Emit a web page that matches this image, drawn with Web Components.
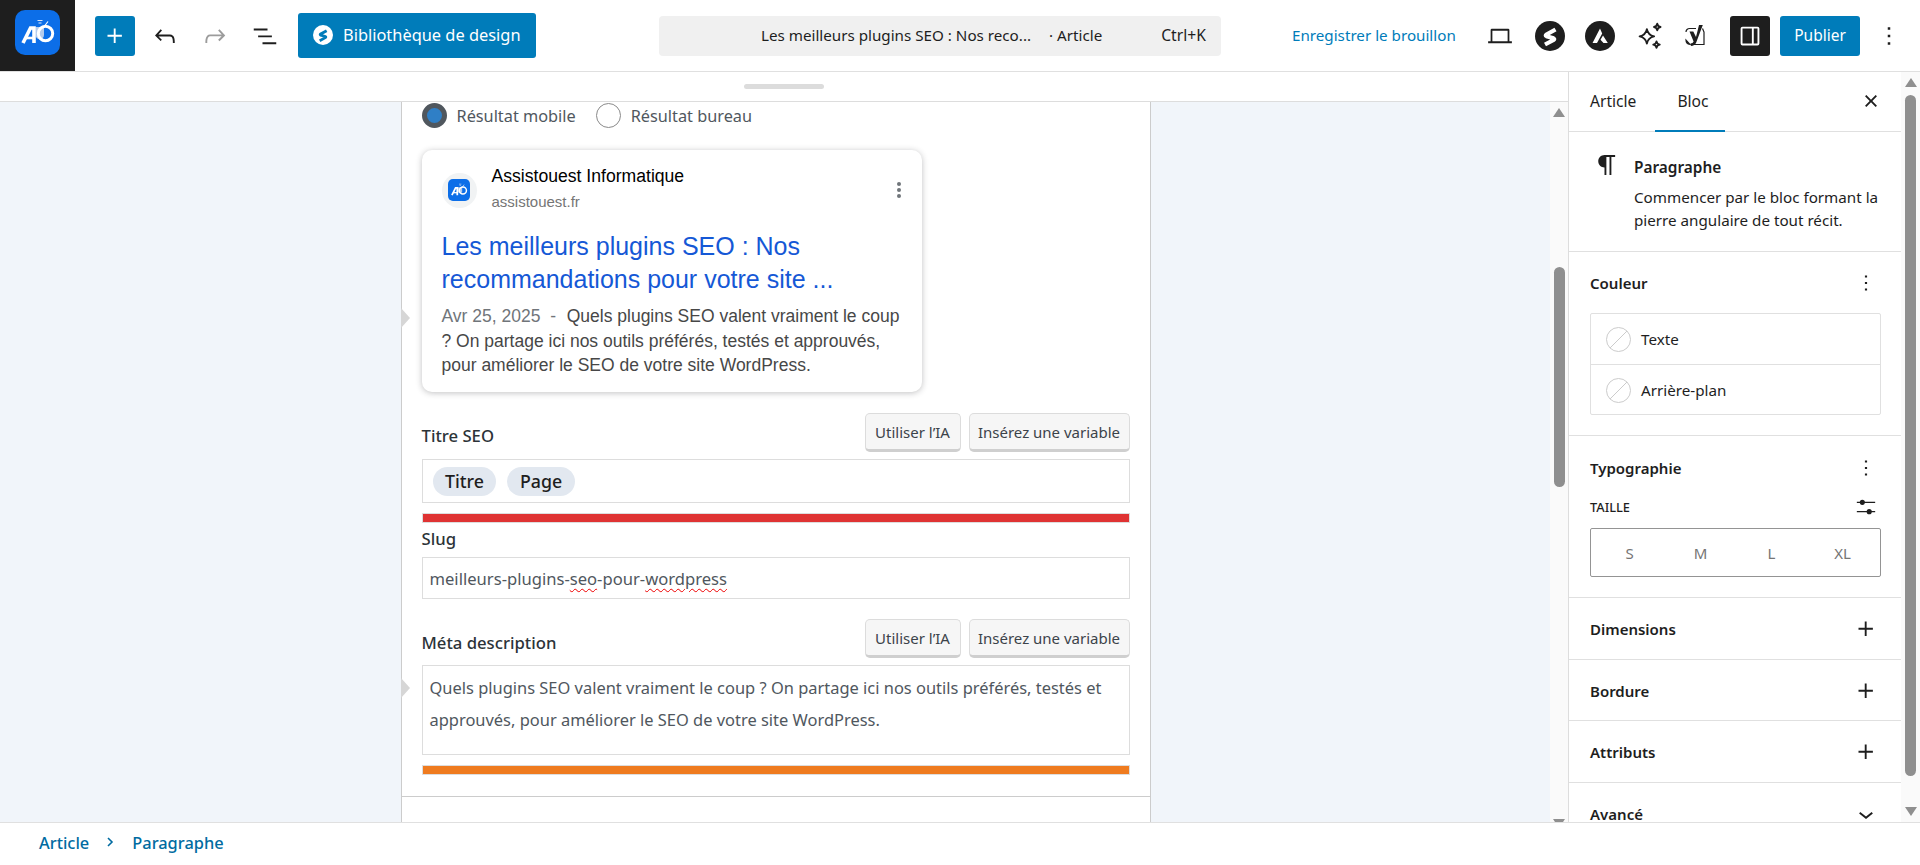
<!DOCTYPE html>
<html lang="fr">
<head>
<meta charset="utf-8">
<title>Éditeur</title>
<style>
  html, body { margin: 0; height: 865px; overflow: hidden; background: #fff; }
  body { font-family: "Noto Sans", "Open Sans", sans-serif; color: #1e1e1e; }
  wp-app { height: 865px; }
</style>
</head>
<body>
<wp-app></wp-app>
<script>
const ICONS = {
    plus: '<path d="M11 12.5V17.5H12.5V12.5H17.5V11H12.5V6H11V11H6V12.5H11Z"/>',
    undo: '<path d="M18.3 11.7c-.6-.6-1.4-.9-2.3-.9H6.7l2.9-3.3-1.1-1-4.5 5L8.5 16l1-1-2.7-2.7H16c.5 0 .9.2 1.3.5 1 1 1 3.4 1 4.5v.3h1.5v-.2c0-1.5 0-4.3-1.5-5.7z"/>',
    redo: '<path d="M15.6 6.5l-1.1 1 2.9 3.3H8c-.9 0-1.7.3-2.3.9-1.4 1.5-1.4 4.2-1.4 5.6v.2h1.5v-.3c0-1.1 0-3.5 1-4.5.3-.3.7-.5 1.3-.5h9.2L14.5 15l1.1 1.1 4.6-4.6-4.6-5z"/>',
    list: '<path d="M3 6h11v1.5H3V6Zm3.5 5.5h11V13h-11v-1.5ZM21 17H10v1.5h11V17Z"/>',
    more: '<path d="M13 19h-2v-2h2v2zm0-6h-2v-2h2v2zm0-6h-2V5h2v2z"/>',
    close: '<path d="M12 13.06l3.712 3.713 1.061-1.06L13.061 12l3.712-3.712-1.06-1.06L12 10.938 8.288 7.227l-1.061 1.06L10.939 12l-3.712 3.712 1.06 1.061L12 13.061z"/>',
    chevron: '<path d="M17.5 11.6L12 16l-5.5-4.4.9-1.2L12 14l4.5-3.6 1 1.2z"/>',
    paragraph: '<path d="m9.99609 14v-.2251l.00391.0001v6.225h1.5v-14.5h2.5v14.5h1.5v-14.5h3v-1.5h-8.50391c-2.76142 0-5 2.23858-5 5 0 2.7614 2.23858 5 5 5z"/>',
    laptop: '<path d="M5.5 6.2h13a1 1 0 0 1 1 1v9.3h-1.4V7.7H5.9v8.8H4.5V7.2a1 1 0 0 1 1-1zM2.5 16.2h19v1.6h-19z"/>',
    sidebar: '<path fill-rule="evenodd" d="M6 4.5h12A1.5 1.5 0 0 1 19.5 6v12a1.5 1.5 0 0 1-1.5 1.5H6A1.5 1.5 0 0 1 4.5 18V6A1.5 1.5 0 0 1 6 4.5zM6 6v12h7.5V6H6zm9 0v12h3V6h-3z"/>',
    sliders: '<path d="M2 6.2h20v1.4H2zM2 16.4h20v1.4H2z"/><circle cx="8" cy="6.9" r="2.8"/><circle cx="15.5" cy="17.1" r="2.8"/>',
    stars: '<g fill="none" stroke="currentColor" stroke-width="1.5" stroke-linejoin="round"><path d="M9.5 6.5c.7 3.6 2.2 5.1 5.8 5.8-3.6.7-5.1 2.2-5.8 5.8-.7-3.6-2.2-5.1-5.8-5.8 3.6-.7 5.1-2.2 5.8-5.8z"/><path d="M17.8 2.2c.3 1.6 1 2.3 2.6 2.6-1.6.3-2.3 1-2.6 2.6-.3-1.6-1-2.3-2.6-2.6 1.6-.3 2.3-1 2.6-2.6z"/><path d="M17.2 16.3c.3 1.6 1 2.3 2.6 2.6-1.6.3-2.3 1-2.6 2.6-.3-1.6-1-2.3-2.6-2.6 1.6-.3 2.3-1 2.6-2.6z"/></g>'
};
const svgIcon = (name, size) => `<svg width="${size}" height="${size}" viewBox="0 0 24 24" fill="currentColor" aria-hidden="true">${ICONS[name]}</svg>`;
const LOGO = `<rect width="45" height="45" rx="10" fill="#0c6ee8"/>
    <path d="M20.5 17h8.500v8a4.200 4.200 0 0 1-8.500 0z" fill="#b4cbec"/>
    <circle cx="30.500" cy="23.500" r="7.200" fill="none" stroke="#fff" stroke-width="3"/>
    <path d="M8 33 15.500 18h3.500v15" fill="none" stroke="#fff" stroke-width="3.600"/>
    <path d="M11 28h8" stroke="#fff" stroke-width="2.600"/>
    <path d="M22.500 10.500h5M23.500 13h3" stroke="#dbe7f8" stroke-width="1.200"/>
    <path d="M28 18 33 11.500" stroke="#fff" stroke-width="1.200"/>`;
const BOLT = 'M20.500 8.500 11.500 13.500Q10 14.500 11.500 15.200L18.500 17.300Q20 18 18.500 19L10 23.500';

// Small square toolbar button, icon goes in the slot
class ToolButton extends HTMLElement {
    constructor() {
        super();
        this.attachShadow({ mode: 'open' }).innerHTML = `
            <style>
                :host { display: flex; align-items: center; justify-content: center; width: 40px; height: 40px; border-radius: 3px; flex: none; color: #1e1e1e; }
                :host([variant="primary"]) { background: #007cba; color: #fff; }
                :host([variant="dark"]) { background: #1e1e1e; color: #fff; }
                :host([muted]) { color: #9c9c9c; }
            </style>
            <slot></slot>`;
    }
}
customElements.define('tool-button', ToolButton);

class EditorHeader extends HTMLElement {
    constructor() {
        super();
        this.attachShadow({ mode: 'open' }).innerHTML = `
            <style>
                :host { display: flex; align-items: center; height: 72px; box-sizing: border-box; border-bottom: 1px solid #e0e0e0; background: #fff; flex: none; font-size: 14px; }
                .brand { width: 75px; height: 71px; background: #1e1e1e; display: flex; align-items: flex-start; box-sizing: border-box; padding: 10px 0 0 15px; flex: none; align-self: flex-start; }
                .tools { display: flex; gap: 10px; margin-left: 20px; }
                .library { display: flex; align-items: center; gap: 10px; margin-left: 13px; width: 238px; height: 45px; box-sizing: border-box; padding: 0 0 2px 15px; background: #007cba; color: #fff; border-radius: 3px; font-size: 16.400px; white-space: nowrap; }
                .command { display: flex; align-items: center; width: 562px; height: 40px; margin-left: 123px; background: #f0f0f0; border-radius: 4px; box-sizing: border-box; padding: 0 15px 2px 102px; font-size: 15.200px; white-space: nowrap; }
                .command .kind { margin-left: 18px; }
                .command .keys { margin-left: auto; font-size: 15.700px; }
                .draft { margin-left: 71px; padding-bottom: 2px; color: #007cba; font-size: 15.200px; white-space: nowrap; }
                .actions { display: flex; align-items: center; gap: 10px; margin-left: auto; padding-right: 11px; }
                .yoast { margin: 0 5px 0 -5px; }
                .publish { width: 80px; height: 40px; box-sizing: border-box; padding-bottom: 2px; display: flex; align-items: center; justify-content: center; background: #007cba; color: #fff; border-radius: 3px; font-size: 15.500px; }
                .dots { margin-left: -1px; }
            </style>
            <div class="brand"><svg width="45" height="45" viewBox="0 0 45 45" aria-hidden="true">${LOGO}</svg></div>
            <div class="tools">
                <tool-button variant="primary">${svgIcon('plus', 30)}</tool-button>
                <tool-button>${svgIcon('undo', 30)}</tool-button>
                <tool-button muted>${svgIcon('redo', 30)}</tool-button>
                <tool-button>${svgIcon('list', 30)}</tool-button>
            </div>
            <div class="library">
                <svg width="20" height="20" viewBox="0 0 30 30" aria-hidden="true"><circle cx="15" cy="15" r="15" fill="#fff"/><path d="${BOLT}" fill="none" stroke="#007cba" stroke-width="4.200"/></svg>
                <span>Bibliothèque de design</span>
            </div>
            <div class="command">
                <span>Les meilleurs plugins SEO : Nos reco...</span>
                <span class="kind">· Article</span>
                <span class="keys">Ctrl+K</span>
            </div>
            <div class="draft">Enregistrer le brouillon</div>
            <div class="actions">
                <tool-button>${svgIcon('laptop', 30)}</tool-button>
                <tool-button><svg width="30" height="30" viewBox="0 0 30 30" aria-hidden="true"><circle cx="15" cy="15" r="15" fill="#1e1e1e"/><path d="${BOLT}" fill="none" stroke="#fff" stroke-width="4.200"/></svg></tool-button>
                <tool-button><svg width="30" height="30" viewBox="0 0 30 30" aria-hidden="true"><circle cx="15" cy="15" r="15" fill="#1e1e1e"/><path d="M15 7.500 17.200 12.500 12 22H7.500zM18 14.500 22.800 22H18.500L15.500 18.800z" fill="#fff"/></svg></tool-button>
                <tool-button>${svgIcon('stars', 30)}</tool-button>
                <tool-button class="yoast"><svg width="20" height="22" viewBox="0 0 20 22" aria-hidden="true"><path d="M1 7a3.500 3.500 0 0 1 3.500-3.500H11M17.500 3.500 19 7v12.500H8M5 19.500A4.500 4.500 0 0 1 1 15z" fill="none" stroke="#1e1e1e" stroke-width="1.200"/><path d="M4.500 6.500H8.300L11 12 14 0H17.800L11.200 17.500Q9.800 20.800 6 21L5.500 18.600Q8 18.400 8.600 16.600Z" fill="#1e1e1e"/></svg></tool-button>
                <tool-button variant="dark">${svgIcon('sidebar', 30)}</tool-button>
                <div class="publish">Publier</div>
                <tool-button class="dots">${svgIcon('more', 30)}</tool-button>
            </div>`;
    }
}
customElements.define('editor-header', EditorHeader);

// Imitation of the browser scrollbars in the screenshot
class FakeScrollbar extends HTMLElement {
    constructor() {
        super();
        this.attachShadow({ mode: 'open' });
    }
    connectedCallback() {
        const top = this.getAttribute('thumb-top') || 0;
        const height = this.getAttribute('thumb-height') || 0;
        const bottom = this.getAttribute('down-gap') || 6;
        this.shadowRoot.innerHTML = `
            <style>
                :host { display: flex; flex-direction: column; align-items: center; flex: none; box-sizing: border-box; background: #fafafa; padding-top: 6px; overflow: hidden; }
                .up, .down { width: 0; height: 0; border-left: 6px solid transparent; border-right: 6px solid transparent; flex: none; }
                .up { border-bottom: 9px solid #8f8f8f; }
                .down { border-top: 9px solid #8f8f8f; margin-top: auto; margin-bottom: ${bottom}px; }
                .thumb { width: 11px; height: ${height}px; margin-top: ${top}px; background: #8f8f8f; border-radius: 6px; flex: none; }
            </style>
            <div class="up"></div>
            <div class="thumb"></div>
            <div class="down"></div>`;
    }
}
customElements.define('fake-scrollbar', FakeScrollbar);

class SerpCard extends HTMLElement {
    constructor() {
        super();
        this.attachShadow({ mode: 'open' }).innerHTML = `
            <style>
                :host { display: block; width: 500px; height: 242px; box-sizing: border-box; background: #fff; border-radius: 10px; box-shadow: 0 1px 6px rgba(32, 33, 36, .28); padding: 11px 20px 0; font-family: "Liberation Sans", Arial, sans-serif; }
                .site { display: flex; align-items: center; height: 58px; }
                .favicon { width: 35px; height: 35px; border-radius: 50%; background: #f1f3f4; display: flex; align-items: center; justify-content: center; margin-right: 15px; flex: none; }
                .names { flex: 1; display: flex; flex-direction: column; gap: 5px; margin-top: -6px; }
                .name { font-size: 17.600px; line-height: 24px; color: #000; }
                .host { font-size: 15px; line-height: 18px; color: #757575; }
                .dots { width: 24px; height: 24px; color: #70757a; margin-right: -9px; display: flex; }
                .title { margin-top: 11px; font-size: 25px; line-height: 33px; color: #1558d6; white-space: nowrap; }
                .desc { margin-top: 8px; font-size: 17.500px; line-height: 24.500px; color: #474747; white-space: nowrap; }
                .date { color: #70757a; padding-right: 1px; }
            </style>
            <div class="site">
                <div class="favicon"><svg width="22" height="22" viewBox="0 0 45 45" aria-hidden="true">${LOGO}</svg></div>
                <div class="names">
                    <div class="name">Assistouest Informatique</div>
                    <div class="host">assistouest.fr</div>
                </div>
                <div class="dots"><svg width="24" height="24" viewBox="0 0 24 24" fill="currentColor" aria-hidden="true"><circle cx="12" cy="6" r="2"/><circle cx="12" cy="12" r="2"/><circle cx="12" cy="18" r="2"/></svg></div>
            </div>
            <div class="title"><div>Les meilleurs plugins SEO : Nos</div><div>recommandations pour votre site ...</div></div>
            <div class="desc">
                <div><span class="date">Avr 25, 2025 &nbsp;-&nbsp;&nbsp;</span><span>Quels plugins SEO valent vraiment le coup</span></div>
                <div>? On partage ici nos outils préférés, testés et approuvés,</div>
                <div>pour améliorer le SEO de votre site WordPress.</div>
            </div>`;
    }
}
customElements.define('serp-card', SerpCard);

// Label row with the two helper buttons, the field itself goes in the slot
class SeoField extends HTMLElement {
    constructor() {
        super();
        this.attachShadow({ mode: 'open' });
    }
    connectedCallback() {
        const label = this.getAttribute('label');
        const plain = this.hasAttribute('plain');
        this.shadowRoot.innerHTML = `
            <style>
                :host { display: block; }
                .head { display: flex; align-items: center; height: 39px; margin-bottom: 7px; }
                :host([plain]) .head { height: 18px; margin-bottom: 7px; }
                label { font-size: 16.700px; font-weight: 500; color: #2c3338; margin-right: auto; white-space: nowrap; margin-top: var(--label-shift, 0); }
                .btn { height: 39px; box-sizing: border-box; display: flex; align-items: center; justify-content: center; background: #f6f6f6; border: 1px solid #dcdcdc; border-bottom: 3px solid #cfcfcf; border-radius: 5px; font-size: 15px; color: #3c434a; margin-left: 8px; white-space: nowrap; }
                .ai { width: 96px; }
                .var { width: 161px; }
            </style>
            <div class="head">
                <label>${label}</label>
                ${plain ? '' : '<div class="btn ai">Utiliser l’IA</div><div class="btn var">Insérez une variable</div>'}
            </div>
            <slot></slot>`;
    }
}
customElements.define('seo-field', SeoField);

class SeoCanvas extends HTMLElement {
    constructor() {
        super();
        this.attachShadow({ mode: 'open' }).innerHTML = `
            <style>
                :host { display: flex; flex-direction: column; flex: 1; min-width: 0; background: #fff; }
                .handle { height: 30px; flex: none; box-sizing: border-box; border-bottom: 1px solid #ddd; display: flex; justify-content: center; padding: 12px 0 0 0; background: #fff; }
                .pill { width: 80px; height: 5px; border-radius: 3px; background: #dcdcdc; }
                .body { flex: 1; min-height: 0; display: flex; }
                .scroller { flex: 1; min-width: 0; box-sizing: border-box; padding-left: 1px; background: #f1f5fa; display: flex; justify-content: center; overflow: hidden; }
                .sheet { position: relative; width: 750px; height: 720px; box-sizing: border-box; background: #fff; border-left: 1px solid #ccc; border-right: 1px solid #ccc; padding: 1px 20px 0; color: #2c3338; }
                .radios { display: flex; align-items: center; height: 25px; font-size: 16.300px; color: #50575e; margin-bottom: 22px; }
                .radio { width: 25px; height: 25px; box-sizing: border-box; border-radius: 50%; border: 1px solid #8a8a8a; background: #fff; margin-right: 10px; flex: none; }
                .radio.on { border: 5px solid #50575e; background: #2f7fc6; }
                .radio + span + .radio { margin-left: 20px; }
                .fields { margin-top: 21px; }
                .box { border: 1px solid #ddd; box-sizing: border-box; background: #fff; }
                .titlebox { height: 44px; display: flex; align-items: center; gap: 11px; padding-left: 10px; }
                .chip { height: 29px; padding: 0 12.500px; display: flex; align-items: center; border-radius: 15px; background: #e2e8f0; font-size: 17.800px; font-weight: 500; color: #1e1e1e; }
                .meter { height: 10px; margin-top: 10px; }
                .slug-wrap { margin-top: 9px; }
                .slugbox { height: 42px; display: flex; align-items: center; padding-left: 7px; font-size: 16.600px; color: #50575e; white-space: nowrap; }
                .typo { text-decoration: underline wavy #e00 1px; text-underline-offset: 3px; }
                .meta-wrap { margin-top: 20px; }
                .metabox { height: 90px; padding: 6px 7px 0; font-size: 16.450px; line-height: 32px; color: #50575e; }
                .rule { position: absolute; left: 0; right: 0; top: 694px; height: 1px; background: #ccc; }
                .caret { position: absolute; left: -1px; width: 0; height: 0; border-top: 10px solid transparent; border-bottom: 10px solid transparent; border-left: 9px solid #d6d6d6; }
            </style>
            <div class="handle"><div class="pill"></div></div>
            <div class="body">
                <div class="scroller">
                    <div class="sheet">
                        <div class="radios">
                            <div class="radio on"></div><span>Résultat mobile</span>
                            <div class="radio"></div><span>Résultat bureau</span>
                        </div>
                        <serp-card></serp-card>
                        <div class="fields">
                            <seo-field label="Titre SEO" style="--label-shift:5px">
                                <div class="box titlebox"><span class="chip">Titre</span><span class="chip">Page</span></div>
                            </seo-field>
                            <div class="meter box" style="background:#df3333"></div>
                            <div class="slug-wrap">
                                <seo-field label="Slug" plain style="--label-shift:-5px">
                                    <div class="box slugbox"><span>meilleurs-plugins-<span class="typo">seo</span>-pour-<span class="typo">wordpress</span></span></div>
                                </seo-field>
                            </div>
                            <div class="meta-wrap">
                                <seo-field label="Méta description" style="--label-shift:7px">
                                    <div class="box metabox">Quels plugins SEO valent vraiment le coup ? On partage ici nos outils préférés, testés et approuvés, pour améliorer le SEO de votre site WordPress.</div>
                                </seo-field>
                            </div>
                            <div class="meter box" style="background:#ef7b1f"></div>
                        </div>
                        <div class="rule"></div>
                        <div class="caret" style="top:206px"></div>
                        <div class="caret" style="top:576px"></div>
                    </div>
                </div>
                <fake-scrollbar style="width:18px" thumb-top="150" thumb-height="220" down-gap="-6"></fake-scrollbar>
            </div>`;
    }
}
customElements.define('seo-canvas', SeoCanvas);

// One section of the settings sidebar
class SidePanel extends HTMLElement {
    constructor() {
        super();
        this.attachShadow({ mode: 'open' });
    }
    connectedCallback() {
        const icon = this.getAttribute('icon') || 'plus';
        const size = icon === 'more' ? 26 : 30;
        this.shadowRoot.innerHTML = `
            <style>
                :host { display: block; box-sizing: border-box; border-bottom: 1px solid #e0e0e0; padding: 0 20px 0 21px; flex: none; }
                .row { display: flex; align-items: center; justify-content: space-between; height: var(--row, 61px); }
                h2 { margin: 0; font-size: 15px; font-weight: 600; color: #1e1e1e; }
                .icon { display: flex; width: 30px; justify-content: center; margin-right: 0; color: #1e1e1e; }
            </style>
            <div class="row"><h2>${this.getAttribute('label')}</h2><span class="icon">${svgIcon(icon, size)}</span></div>
            <slot></slot>`;
    }
}
customElements.define('side-panel', SidePanel);

class EditorSidebar extends HTMLElement {
    constructor() {
        super();
        this.attachShadow({ mode: 'open' }).innerHTML = `
            <style>
                :host { display: flex; flex-direction: column; width: 333px; box-sizing: border-box; border-left: 1px solid #ddd; background: #fff; flex: none; overflow: hidden; font-size: 14px; color: #1e1e1e; }
                .tabs { display: flex; align-items: center; height: 60px; box-sizing: border-box; border-bottom: 1px solid #e0e0e0; flex: none; position: relative; padding: 0 0 2px 21px; font-size: 15.600px; }
                .tabs .on { margin-left: 41px; }
                .tabs .on::after { content: ""; position: absolute; left: 86px; bottom: -1px; width: 70px; height: 2px; background: #007cba; }
                .tabs .x { margin-left: auto; margin-right: 15px; display: flex; }
                .info { height: 120px; box-sizing: border-box; border-bottom: 1px solid #e0e0e0; display: flex; flex: none; padding: 24px 0 0 21px; }
                .info .glyph { width: 42px; flex: none; margin: -6px 0 0 2px; display: flex; align-items: flex-start; height: 30px; }
                .info h3 { margin: 0 0 7px; font-size: 15.400px; line-height: 23px; font-weight: 600; }
                .info p { margin: 0; font-size: 15.200px; line-height: 23px; width: 252px; }
                .swatches { width: 291px; height: 102px; box-sizing: border-box; border: 1px solid #e0e0e0; border-radius: 2px; }
                .swatch { height: 50px; display: flex; align-items: center; gap: 10px; padding-left: 15px; font-size: 15.200px; }
                .swatch + .swatch { border-top: 1px solid #e0e0e0; }
                .dot { width: 25px; height: 25px; box-sizing: border-box; border-radius: 50%; border: 1px solid #ccc; background: linear-gradient(to bottom right, transparent calc(50% - .6px), #ccc calc(50% - .6px), #ccc calc(50% + .6px), transparent calc(50% + .6px)); }
                .size-head { display: flex; align-items: center; justify-content: space-between; height: 20px; font-size: 12.800px; font-weight: 500; margin: -3px 0 11px; }
                .size-head span:last-child { display: flex; margin-right: 4px; }
                .sizes { width: 291px; height: 49px; box-sizing: border-box; border: 1px solid #949494; border-radius: 2px; display: grid; grid-template-columns: repeat(4, 71px); padding-left: 3px; align-items: center; justify-items: center; color: #757575; font-size: 15px; }
            </style>
            <div class="tabs"><span>Article</span><span class="on">Bloc</span><span class="x">${svgIcon('close', 30)}</span></div>
            <div class="info">
                <div class="glyph">${svgIcon('paragraph', 30)}</div>
                <div><h3>Paragraphe</h3><p>Commencer par le bloc formant la pierre angulaire de tout récit.</p></div>
            </div>
            <side-panel label="Couleur" icon="more" style="height:184px;--row:61px">
                <div class="swatches">
                    <div class="swatch"><span class="dot"></span>Texte</div>
                    <div class="swatch"><span class="dot"></span>Arrière-plan</div>
                </div>
            </side-panel>
            <side-panel label="Typographie" icon="more" style="height:162px;--row:64px">
                <div class="size-head"><span>TAILLE</span><span>${svgIcon('sliders', 22)}</span></div>
                <div class="sizes"><span>S</span><span>M</span><span>L</span><span>XL</span></div>
            </side-panel>
            <side-panel label="Dimensions" style="height:62px"></side-panel>
            <side-panel label="Bordure" style="height:61px"></side-panel>
            <side-panel label="Attributs" style="height:62px"></side-panel>
            <side-panel label="Avancé" icon="chevron" style="height:62px;border:0"></side-panel>`;
    }
}
customElements.define('editor-sidebar', EditorSidebar);

class EditorFooter extends HTMLElement {
    constructor() {
        super();
        this.attachShadow({ mode: 'open' }).innerHTML = `
            <style>
                :host { display: flex; align-items: center; height: 43px; box-sizing: border-box; border-top: 1px solid #e0e0e0; padding: 0 0 4px 39px; background: #fff; color: #006ba1; font-size: 16.400px; font-weight: 500; flex: none; }
                svg { margin: 0 17px 0 16px; }
            </style>
            <span>Article</span>
            <svg width="10" height="12" viewBox="0 0 10 12" fill="none" stroke="#006ba1" stroke-width="1.600" aria-hidden="true"><path d="M3 2l4 4-4 4"/></svg>
            <span>Paragraphe</span>`;
    }
}
customElements.define('editor-footer', EditorFooter);

class WpApp extends HTMLElement {
    constructor() {
        super();
        this.attachShadow({ mode: 'open' }).innerHTML = `
            <style>
                :host { display: flex; flex-direction: column; width: 1920px; overflow: hidden; }
                main { display: flex; flex: 1; min-height: 0; }
            </style>
            <editor-header></editor-header>
            <main>
                <seo-canvas></seo-canvas>
                <editor-sidebar></editor-sidebar>
                <fake-scrollbar style="width:19px" thumb-top="8" thumb-height="681"></fake-scrollbar>
            </main>
            <editor-footer></editor-footer>`;
    }
}
customElements.define('wp-app', WpApp);
</script>
</body>
</html>
